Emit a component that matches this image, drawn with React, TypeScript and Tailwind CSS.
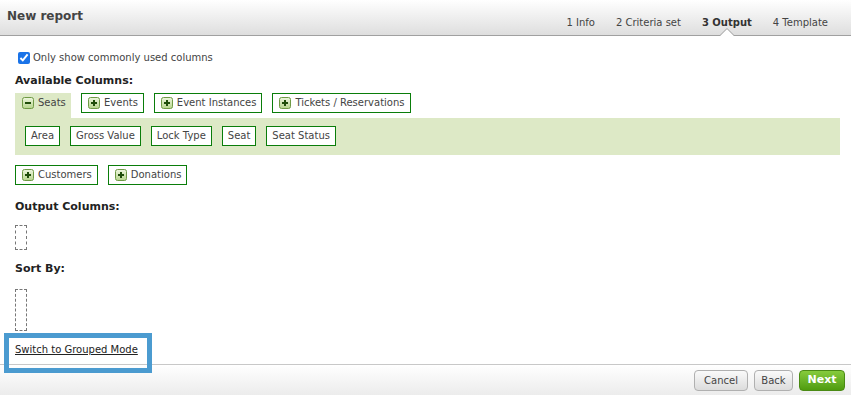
import * as React from "react";

const font = { fontFamily: '"DejaVu Sans", Verdana, sans-serif' };

function ToggleIcon({ open }: { open?: boolean }) {
  return (
    <svg width="12" height="12" viewBox="0 0 12 12" className="shrink-0">
      <defs>
        <linearGradient id={open ? "gm" : "gp"} x1="0" y1="0" x2="0" y2="1">
          <stop offset="0" stopColor="#eef6df" />
          <stop offset="1" stopColor="#b6d58c" />
        </linearGradient>
      </defs>
      <rect x="0.5" y="0.5" width="11" height="11" rx="2" fill={`url(#${open ? "gm" : "gp"})`} stroke="#6f9a45" />
      <rect x="3" y="5" width="6" height="2" fill="#1f4d0a" />
      {!open && <rect x="5" y="3" width="2" height="6" fill="#1f4d0a" />}
    </svg>
  );
}

function GroupTab({ label }: { label: string }) {
  return (
    <div className="flex items-center gap-[4px] h-[20px] pl-[6px] pr-[5px] border border-[#0a7d0a] text-[10px] leading-[14px] text-[#444]">
      <ToggleIcon />
      <span>{label}</span>
    </div>
  );
}

function ColumnItem({ label }: { label: string }) {
  return (
    <div className="flex items-center h-[20px] px-[5px] border border-[#0a7d0a] bg-white text-[10px] leading-[14px] text-[#444]">
      {label}
    </div>
  );
}

const steps = [
  { n: "1 Info", active: false },
  { n: "2 Criteria set", active: false },
  { n: "3 Output", active: true },
  { n: "4 Template", active: false },
];

export default function App() {
  return (
    <div className="relative w-[851px] h-[395px] flex flex-col bg-white text-[#333] overflow-hidden" style={font}>
      {/* header */}
      <div className="relative h-[36px] shrink-0 flex items-center justify-between border-b border-[#a0a0a0] bg-gradient-to-b from-white to-[#dedede] pl-[7px] pr-[23px]">
        <div className="text-[12px] leading-[16px] font-bold text-[#444] -mt-[4px]">New report</div>
        <div className="flex items-center gap-[21px] text-[10px] leading-[14px] text-[#444] mt-[10px]">
          {steps.map((s) => (
            <div key={s.n} className={"relative " + (s.active ? "font-bold text-[#333]" : "")}>
              {s.n}
              {s.active && (
                <svg width="14" height="8" viewBox="0 0 14 8" className="absolute left-1/2 -translate-x-1/2 top-[12px]">
                  <path d="M0 8 L7 1 L14 8 Z" fill="#fff" />
                  <path d="M0 7.5 L7 0.5 L14 7.5" fill="none" stroke="#a0a0a0" />
                </svg>
              )}
            </div>
          ))}
        </div>
      </div>

      {/* body */}
      <div className="flex-1 flex flex-col pl-[15px] pr-[11px] pt-[15px]">
        <label className="flex items-center gap-[3px] ml-[3px] text-[10px] leading-[14px] text-[#444]">
          <input type="checkbox" defaultChecked className="w-[12px] h-[12px] m-0 accent-[#1a73e8]" />
          <span>Only show commonly used columns</span>
        </label>

        <div className="mt-[9px] text-[11px] leading-[14px] font-bold text-[#222]">Available Columns:</div>

        <div className="mt-[5px] flex items-start gap-[10px]">
          <div className="flex items-center gap-[4px] h-[25px] w-[56px] pl-[7px] pb-[5px] bg-[#dde9c6] text-[10px] leading-[14px] text-[#444]">
            <ToggleIcon open />
            <span>Seats</span>
          </div>
          <GroupTab label="Events" />
          <GroupTab label="Event Instances" />
          <GroupTab label="Tickets / Reservations" />
        </div>
        <div className="flex items-center gap-[10px] h-[37px] pl-[10px] pb-[1px] bg-[#dde9c6]">
          <ColumnItem label="Area" />
          <ColumnItem label="Gross Value" />
          <ColumnItem label="Lock Type" />
          <ColumnItem label="Seat" />
          <ColumnItem label="Seat Status" />
        </div>

        <div className="mt-[10px] flex gap-[10px]">
          <GroupTab label="Customers" />
          <GroupTab label="Donations" />
        </div>

        <div className="mt-[15px] text-[11px] leading-[14px] font-bold text-[#222]">Output Columns:</div>
        <div className="mt-[11px] w-[12px] h-[25px] border border-dashed border-[#777]" />

        <div className="mt-[12px] text-[11px] leading-[14px] font-bold text-[#222]">Sort By:</div>
        <div className="mt-[13px] w-[12px] h-[42px] border border-dashed border-[#777]" />

        <div className="mt-[12px] text-[10px] leading-[14px] text-[#222] underline">Switch to Grouped Mode</div>
      </div>

      {/* footer */}
      <div className="h-[31px] shrink-0 flex items-center justify-end gap-[6px] pr-[6px] border-t border-[#c8c8c8] bg-gradient-to-b from-white to-[#ececec]">
        <button className="h-[21px] w-[54px] rounded-[4px] border border-[#b0b0b0] bg-gradient-to-b from-[#fafafa] to-[#dcdcdc] text-[10px] text-[#444]">
          Cancel
        </button>
        <button className="h-[21px] w-[39px] rounded-[4px] border border-[#b0b0b0] bg-gradient-to-b from-[#fafafa] to-[#dcdcdc] text-[10px] text-[#444]">
          Back
        </button>
        <button className="h-[21px] w-[46px] rounded-[4px] border border-[#4a8a14] bg-gradient-to-b from-[#86cb3c] to-[#4f9c0e] text-[11px] font-bold text-white">
          Next
        </button>
      </div>

      {/* highlight overlay */}
      <div className="absolute left-[4px] top-[333px] w-[148px] h-[40px] border-[5px] border-[#4b9bd0] pointer-events-none" />
    </div>
  );
}
